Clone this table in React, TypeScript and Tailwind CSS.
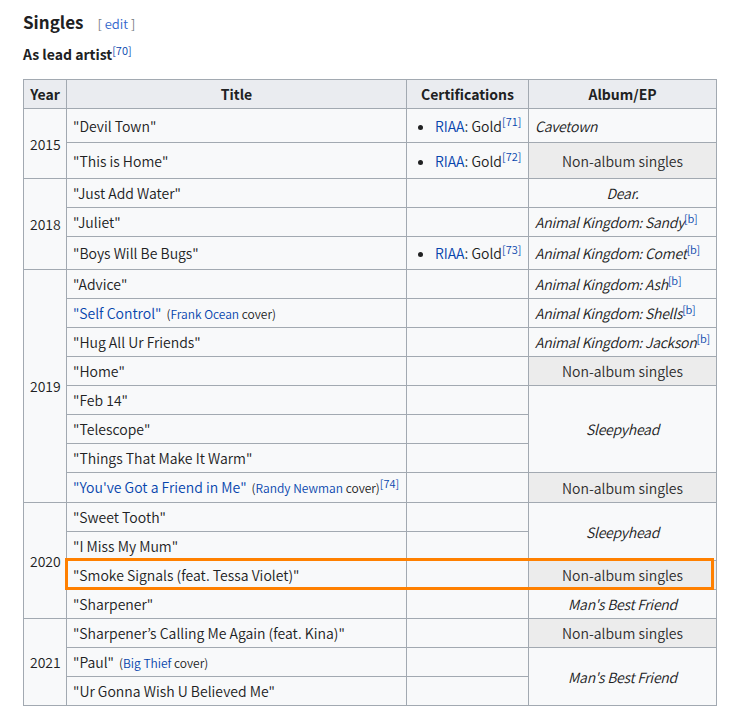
import type { ReactNode } from "react";

type Album = {
  text: string;
  kind: "italic-left" | "italic-center" | "na";
  sup?: string;
  span?: number;
};

type Row = {
  h: number;
  year?: { text: string; span: number };
  title: ReactNode;
  cert?: number;
  album?: Album;
};

const FONT = "font-['Noto_Sans_CJK_KR','Noto_Sans',sans-serif]";

function Ref({ n }: { n: string }) {
  return <sup className="text-[11px] font-[350] not-italic text-[#0645ad]">[{n}]</sup>;
}

function Cover({ artist }: { artist: string }) {
  return (
    <span className="text-[12px] ml-[5px]">
      (<span className="text-[#0645ad]">{artist}</span> cover)
    </span>
  );
}

const ROWS: Row[] = [
  { h: 34, year: { text: "2015", span: 2 }, title: "\"Devil Town\"", cert: 71, album: { text: "Cavetown", kind: "italic-left" } },
  { h: 36, title: "\"This is Home\"", cert: 72, album: { text: "Non-album singles", kind: "na" } },
  { h: 29, year: { text: "2018", span: 3 }, title: "\"Just Add Water\"", album: { text: "Dear.", kind: "italic-center" } },
  { h: 29, title: "\"Juliet\"", album: { text: "Animal Kingdom: Sandy", kind: "italic-left", sup: "b" } },
  { h: 33, title: "\"Boys Will Be Bugs\"", cert: 73, album: { text: "Animal Kingdom: Comet", kind: "italic-left", sup: "b" } },
  { h: 29, year: { text: "2019", span: 8 }, title: "\"Advice\"", album: { text: "Animal Kingdom: Ash", kind: "italic-left", sup: "b" } },
  {
    h: 29,
    title: (
      <>
        <span className="text-[#0645ad]">"Self Control"</span>
        <Cover artist="Frank Ocean" />
      </>
    ),
    album: { text: "Animal Kingdom: Shells", kind: "italic-left", sup: "b" },
  },
  { h: 29, title: "\"Hug All Ur Friends\"", album: { text: "Animal Kingdom: Jackson", kind: "italic-left", sup: "b" } },
  { h: 29, title: "\"Home\"", album: { text: "Non-album singles", kind: "na" } },
  { h: 29, title: "\"Feb 14\"", album: { text: "Sleepyhead", kind: "italic-center", span: 3 } },
  { h: 29, title: "\"Telescope\"" },
  { h: 29, title: "\"Things That Make It Warm\"" },
  {
    h: 30,
    title: (
      <>
        <span className="text-[#0645ad]">"You've Got a Friend in Me"</span>
        <Cover artist="Randy Newman" />
        <Ref n="74" />
      </>
    ),
    album: { text: "Non-album singles", kind: "na" },
  },
  { h: 29, year: { text: "2020", span: 4 }, title: "\"Sweet Tooth\"", album: { text: "Sleepyhead", kind: "italic-center", span: 2 } },
  { h: 29, title: "\"I Miss My Mum\"" },
  { h: 29, title: "\"Smoke Signals (feat. Tessa Violet)\"", album: { text: "Non-album singles", kind: "na" } },
  { h: 29, title: "\"Sharpener\"", album: { text: "Man's Best Friend", kind: "italic-center" } },
  { h: 29, year: { text: "2021", span: 3 }, title: "\"Sharpener’s Calling Me Again (feat. Kina)\"", album: { text: "Non-album singles", kind: "na" } },
  {
    h: 29,
    title: (
      <>
        "Paul"
        <Cover artist="Big Thief" />
      </>
    ),
    album: { text: "Man's Best Friend", kind: "italic-center", span: 2 },
  },
  { h: 29, title: "\"Ur Gonna Wish U Believed Me\"" },
];

const CELL = "border border-[#a2a9b1] px-[6px] py-0 align-middle whitespace-nowrap";

function AlbumCell({ album }: { album: Album }) {
  if (album.kind === "na") {
    return (
      <td rowSpan={album.span} className={`${CELL} text-center bg-[#ececec] text-[#2c2c2c]`}>
        {album.text}
      </td>
    );
  }
  return (
    <td
      rowSpan={album.span}
      className={`${CELL} italic tracking-[-0.25px] ${album.kind === "italic-center" ? "text-center" : "text-left"}`}
    >
      {album.text}
      {album.sup && <Ref n={album.sup} />}
    </td>
  );
}

export default function App() {
  return (
    <div className={`min-h-[710px] bg-white px-[23px] pt-[9px] text-[14px] font-[350] text-[#202122] ${FONT}`}>
      {/* heading */}
      <div className="flex items-baseline gap-[14px] h-[26px]">
        <h2 className="text-[17px] font-bold leading-[26px]">Singles</h2>
        <span className="text-[13px] text-[#3366cc]">
          <span className="text-[#72777d]">[</span> edit <span className="text-[#72777d]">]</span>
        </span>
      </div>
      <p className="font-bold mt-[8px] leading-[22px]">
        As lead artist<Ref n="70" />
      </p>

      <div className="relative mt-[14px] w-[693px]">
        <table className="w-[693px] table-fixed border-collapse border border-[#a2a9b1] bg-[#f8f9fa] leading-[20px]">
          <colgroup>
            <col className="w-[43px]" />
            <col className="w-[340px]" />
            <col className="w-[122px]" />
            <col className="w-[188px]" />
          </colgroup>
          <thead>
            <tr className="h-[29px] bg-[#eaecf0]">
              <th className={`${CELL} font-bold text-center`}>Year</th>
              <th className={`${CELL} font-bold text-center`}>Title</th>
              <th className={`${CELL} font-bold text-center`}>Certifications</th>
              <th className={`${CELL} font-bold text-center`}>Album/EP</th>
            </tr>
          </thead>
          <tbody>
            {ROWS.map((row, i) => (
              <tr key={i} style={{ height: row.h }}>
                {row.year && (
                  <td rowSpan={row.year.span} className={`${CELL} text-left`}>
                    {row.year.text}
                  </td>
                )}
                <td className={CELL}>{row.title}</td>
                <td className={CELL}>
                  {row.cert && (
                    <ul className="list-disc ml-[22px] marker:text-[#202122]">
                      <li>
                        <span className="text-[#0645ad]">RIAA</span>: Gold
                        <Ref n={String(row.cert)} />
                      </li>
                    </ul>
                  )}
                </td>
                {row.album && <AlbumCell album={row.album} />}
              </tr>
            ))}
          </tbody>
        </table>

        {/* highlight box */}
        <div className="absolute left-[42px] top-[479px] w-[649px] h-[32px] border-[3px] border-[#ff8000] pointer-events-none" />
      </div>
    </div>
  );
}
